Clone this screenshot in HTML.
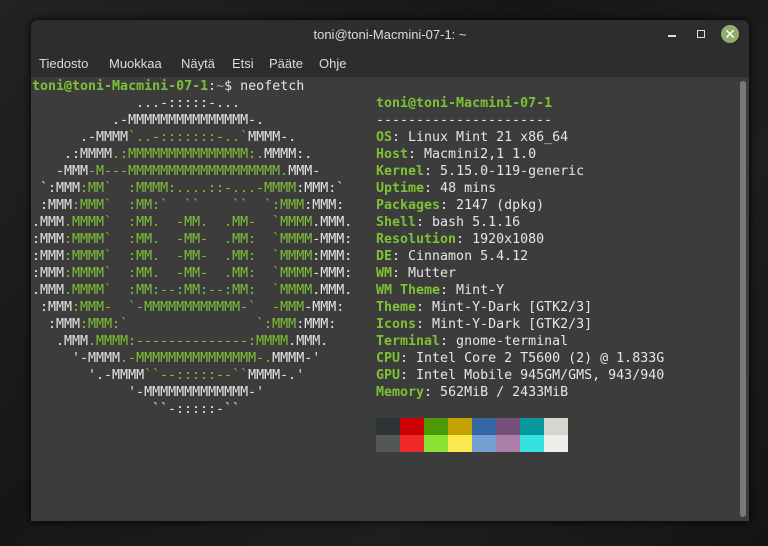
<!DOCTYPE html>
<html><head><meta charset="utf-8"><style>
*{margin:0;padding:0;box-sizing:border-box}
body{width:768px;height:546px;background:#1c1c1c;overflow:hidden;position:relative;font-family:"Liberation Sans",sans-serif}
.bg1{position:absolute;left:0;top:0;width:768px;height:546px;background:linear-gradient(135deg,#232323 0%,#161616 40%,#1e1e1e 70%,#141414 100%)}
.win{position:absolute;left:31px;top:20px;width:718px;height:501px;background:#2d2d2d;border-radius:7px 7px 0 0;overflow:hidden;box-shadow:0 0 8px #000}
.title{position:absolute;left:0;top:0;width:100%;height:30px;text-align:center;line-height:30px;color:#dcdcdc;font-size:13px}
.menu{position:absolute;left:0;top:30px;height:27px;width:100%;font-size:13px;color:#dcdcdc;line-height:27px}
.menu span{position:absolute}
.term{position:absolute;left:0;top:57px;width:718px;height:444px;background:#3c3c3c}
pre{position:absolute;left:1px;top:1px;font-family:"DejaVu Sans Mono",monospace;font-size:13.3px;line-height:17px;color:#e6e6e6}
pre.r{left:345px;top:18px}
.g{color:#7ec234}
.b{font-weight:bold}
.sb{position:absolute;left:709px;top:4px;width:6px;height:436px;background:#7a7a7a;border-radius:3px}
.cb{position:absolute;width:24px;height:17px}
</style></head><body>
<div class="bg1"></div>
<div class="win">
<div class="title">toni@toni-Macmini-07-1: ~</div>
<div style="position:absolute;left:637px;top:15px;width:8px;height:1.5px;background:#ddd"></div>
<div style="position:absolute;left:666px;top:10px;width:8px;height:8px;border:1.3px solid #ddd"></div>
<div style="position:absolute;left:690px;top:5px;width:18px;height:18px;border-radius:50%;background:#8cb06a;color:#fff;font-size:14px;line-height:18px;text-align:center">✕</div>
<div class="menu"><span style="left:8px">Tiedosto</span><span style="left:78px">Muokkaa</span><span style="left:150px">Näytä</span><span style="left:201px">Etsi</span><span style="left:238px">Pääte</span><span style="left:288px">Ohje</span></div>
<div class="term">
<pre><span class="g b">toni@toni-Macmini-07-1</span>:<span style="color:#9aa7b8">~</span>$ neofetch
             ...-:::::-...
          .-MMMMMMMMMMMMMMM-.
      .-MMMM<span class="g">`..-:::::::-..`</span>MMMM-.
    .:MMMM<span class="g">.:MMMMMMMMMMMMMMM:.</span>MMMM:.
   -MMM<span class="g">-M---MMMMMMMMMMMMMMMMMMM.</span>MMM-
 `:MMM<span class="g">:MM`  :MMMM:....::-...-MMMM</span>:MMM:`
 :MMM<span class="g">:MMM`  :MM:`  ``    ``  `:MMM</span>:MMM:
.MMM<span class="g">.MMMM`  :MM.  -MM.  .MM-  `MMMM</span>.MMM.
:MMM<span class="g">:MMMM`  :MM.  -MM-  .MM:  `MMMM</span>-MMM:
:MMM<span class="g">:MMMM`  :MM.  -MM-  .MM:  `MMMM</span>:MMM:
:MMM<span class="g">:MMMM`  :MM.  -MM-  .MM:  `MMMM</span>-MMM:
.MMM<span class="g">.MMMM`  :MM:--:MM:--:MM:  `MMMM</span>.MMM.
 :MMM<span class="g">:MMM-  `-MMMMMMMMMMMM-`  -MMM</span>-MMM:
  :MMM<span class="g">:MMM:`                `:MMM</span>:MMM:
   .MMM<span class="g">.MMMM:--------------:MMMM</span>.MMM.
     '-MMMM<span class="g">.-MMMMMMMMMMMMMMM-.</span>MMMM-'
       '.-MMMM<span class="g">``--:::::--``</span>MMMM-.'
            '-MMMMMMMMMMMMM-'
               ``-:::::-``






<span class="g b">toni@toni-Macmini-07-1</span>:<span style="color:#9aa7b8">~</span>$ <span style="background:#eee">&nbsp;</span></pre>
<pre class="r"><span class="g b">toni@toni-Macmini-07-1</span>
----------------------
<span class="g b">OS</span>: Linux Mint 21 x86_64
<span class="g b">Host</span>: Macmini2,1 1.0
<span class="g b">Kernel</span>: 5.15.0-119-generic
<span class="g b">Uptime</span>: 48 mins
<span class="g b">Packages</span>: 2147 (dpkg)
<span class="g b">Shell</span>: bash 5.1.16
<span class="g b">Resolution</span>: 1920x1080
<span class="g b">DE</span>: Cinnamon 5.4.12
<span class="g b">WM</span>: Mutter
<span class="g b">WM Theme</span>: Mint-Y
<span class="g b">Theme</span>: Mint-Y-Dark [GTK2/3]
<span class="g b">Icons</span>: Mint-Y-Dark [GTK2/3]
<span class="g b">Terminal</span>: gnome-terminal
<span class="g b">CPU</span>: Intel Core 2 T5600 (2) @ 1.833G
<span class="g b">GPU</span>: Intel Mobile 945GM/GMS, 943/940
<span class="g b">Memory</span>: 562MiB / 2433MiB</pre>
<div class="sb"></div>
<div class="cb" style="left:345px;top:341px;background:#2e3436"></div>
<div class="cb" style="left:369px;top:341px;background:#cc0000"></div>
<div class="cb" style="left:393px;top:341px;background:#4e9a06"></div>
<div class="cb" style="left:417px;top:341px;background:#c4a000"></div>
<div class="cb" style="left:441px;top:341px;background:#3465a4"></div>
<div class="cb" style="left:465px;top:341px;background:#75507b"></div>
<div class="cb" style="left:489px;top:341px;background:#06989a"></div>
<div class="cb" style="left:513px;top:341px;background:#d3d7cf"></div>
<div class="cb" style="left:345px;top:358px;background:#555753"></div>
<div class="cb" style="left:369px;top:358px;background:#ef2929"></div>
<div class="cb" style="left:393px;top:358px;background:#8ae234"></div>
<div class="cb" style="left:417px;top:358px;background:#fce94f"></div>
<div class="cb" style="left:441px;top:358px;background:#729fcf"></div>
<div class="cb" style="left:465px;top:358px;background:#ad7fa8"></div>
<div class="cb" style="left:489px;top:358px;background:#34e2e2"></div>
<div class="cb" style="left:513px;top:358px;background:#eeeeec"></div>
</div>
</div>
</body></html>
